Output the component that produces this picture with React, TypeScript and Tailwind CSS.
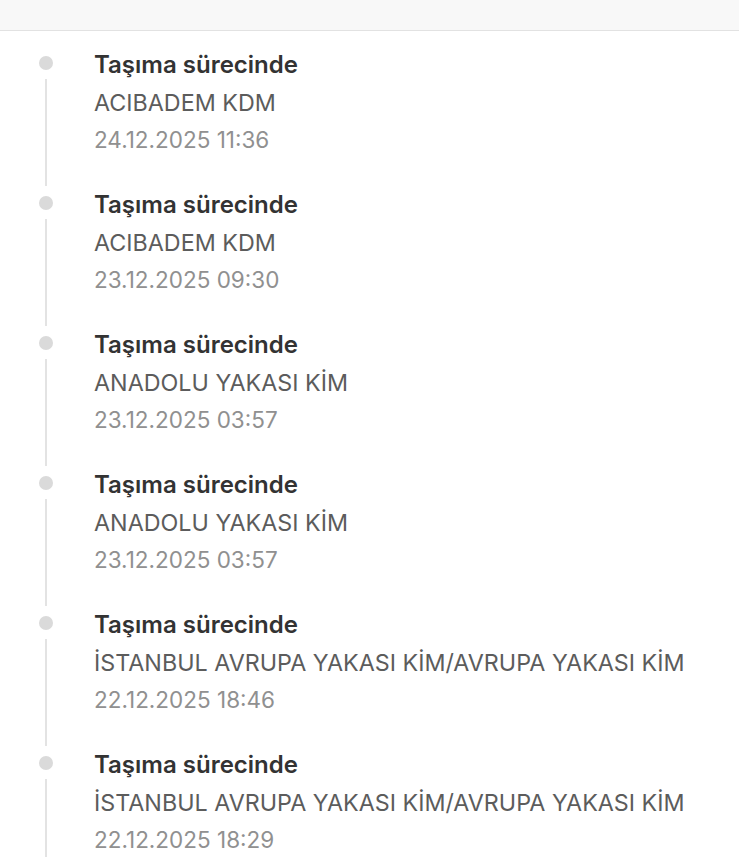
const events = [
  { place: 'ACIBADEM KDM', date: '24.12.2025 11:36' },
  { place: 'ACIBADEM KDM', date: '23.12.2025 09:30' },
  { place: 'ANADOLU YAKASI KİM', date: '23.12.2025 03:57' },
  { place: 'ANADOLU YAKASI KİM', date: '23.12.2025 03:57' },
  { place: 'İSTANBUL AVRUPA YAKASI KİM/AVRUPA YAKASI KİM', date: '22.12.2025 18:46' },
  { place: 'İSTANBUL AVRUPA YAKASI KİM/AVRUPA YAKASI KİM', date: '22.12.2025 18:29' },
];

export default function App() {
  return (
    <div className="h-[857px] overflow-hidden bg-white font-['Inter',sans-serif]">
      <div className="h-[31px] border-b border-[#e2e2e2] bg-[#f8f8f8]" />
      <ul>
        {events.map((ev, i) => (
          <li key={i} className="flex h-[140px]">
            <div className="w-[94px] shrink-0 pl-[39px]">
              <div className="flex w-[14px] flex-col items-center">
                <span className="mt-[25px] h-[14px] w-[14px] rounded-full bg-[#dadada]" />
                <span className="mt-[9px] h-[107px] w-[2px] bg-[#e3e3e3]" />
              </div>
            </div>
            <div className="pt-[14px]">
              <p className="text-[24px] font-semibold leading-[39px] text-[#333333]">
                Taşıma sürecinde
              </p>
              <p className="text-[23.3px] leading-[37px] text-[#5c5c5c]">{ev.place}</p>
              <p className="text-[22.5px] leading-[37px] text-[#909090]">{ev.date}</p>
            </div>
          </li>
        ))}
      </ul>
    </div>
  );
}
